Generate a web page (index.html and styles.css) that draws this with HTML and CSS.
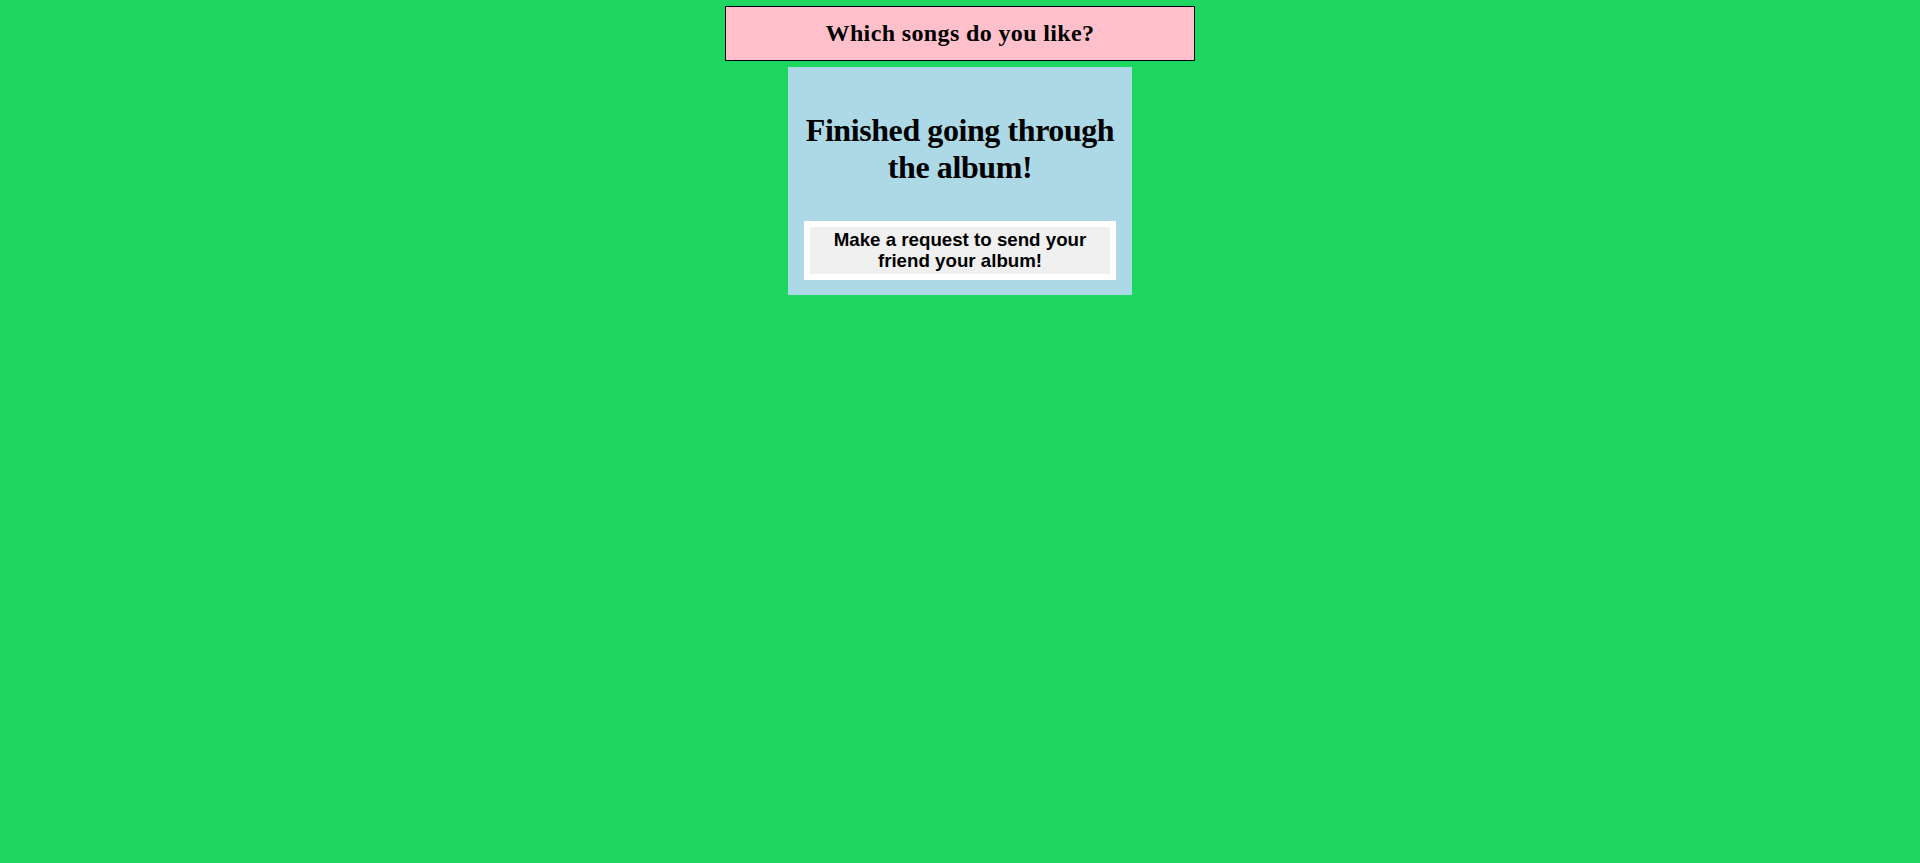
FILE: index.html
```html
<!DOCTYPE html>
<html>
<head>
<meta charset="utf-8">
<title>Which songs do you like?</title>
<link rel="stylesheet" href="styles.css">
</head>
<body>
  <main class="page">
    <header class="title-box">
      <h2 class="title">Which songs do you like?</h2>
    </header>
    <section class="card">
      <h1 class="done">Finished going through the album!</h1>
      <button class="send-btn" type="button">Make a request to send your friend your album!</button>
    </section>
  </main>
</body>
</html>
```

FILE: styles.css
```css
html, body {
  margin: 0;
  padding: 0;
  background: #1ed760;
  height: 100%;
}

.page {
  display: flex;
  flex-direction: column;
  align-items: center;
  gap: 6px;
  padding-top: 6px;
}

.title-box {
  width: 468px;
  background: pink;
  border: 1px solid #000;
  padding: 12.7px 0;
  text-align: center;
}

.title {
  margin: 0;
  font-family: "Liberation Serif", "Times New Roman", serif;
  font-size: 24px;
  line-height: 27.6px;
  letter-spacing: 0.37px;
  font-weight: bold;
  color: #000;
}

.card {
  width: 312px;
  background: lightblue;
  padding: 16px 16px 15px;
  text-align: center;
}

.done {
  margin: 29px 0 35px;
  font-family: "Liberation Serif", "Times New Roman", serif;
  font-size: 32px;
  line-height: 36.8px;
  letter-spacing: -0.42px;
  font-weight: bold;
  color: #000;
}

.send-btn {
  display: block;
  width: 312px;
  margin: 0;
  border: 6px solid #fff;
  background: #f0f0f0;
  padding: 2px 6px;
  font-family: "Liberation Sans", Arial, sans-serif;
  font-size: 18.72px;
  line-height: 21.5px;
  font-weight: bold;
  color: #000;
  text-align: center;
}
```
